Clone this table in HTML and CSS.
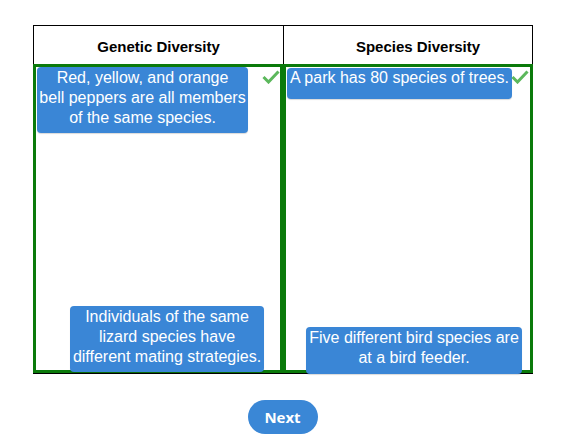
FILE: index.html
```html
<!DOCTYPE html>
<html>
<head>
<meta charset="utf-8">
<link rel="stylesheet" href="styles.css">
</head>
<body>
<div class="wrap">
  <div class="table">
    <div class="head head-left">Genetic Diversity</div>
    <div class="head head-right">Species Diversity</div>
    <div class="cell">
      <div class="card c1">Red, yellow, and orange<br>bell peppers are all members<br>of the same species.</div>
      <svg class="check k1" width="18" height="14" viewBox="0 0 18 14"><polyline points="1.5,7 6.5,12 16.5,1.5" fill="none" stroke="#5cb85c" stroke-width="3"/></svg>
      <div class="card c3">Individuals of the same<br>lizard species have<br>different mating strategies.</div>
    </div>
    <div class="cell">
      <div class="card c2">A park has 80 species of trees.</div>
      <svg class="check k2" width="18" height="14" viewBox="0 0 18 14"><polyline points="1.5,7 6.5,12 16.5,1.5" fill="none" stroke="#5cb85c" stroke-width="3"/></svg>
      <div class="card c4">Five different bird species are<br>at a bird feeder.</div>
    </div>
  </div>
  <div class="actions">
    <button class="next">Next</button>
  </div>
</div>
</body>
</html>
```
FILE: styles.css
```css
html, body {
  margin: 0;
  padding: 0;
  background: #fff;
}
.wrap {
  width: 500px;
  margin-left: 33px;
  padding-top: 25px;
}
.table {
  display: grid;
  grid-template-columns: 250px 250px;
  border-bottom: 1px solid #000;
}
.head {
  border-top: 1px solid #000;
  border-left: 1px solid #000;
  font-family: "Liberation Sans", Arial, sans-serif;
  font-weight: bold;
  font-size: 15px;
  color: #000;
  display: flex;
  align-items: center;
  justify-content: center;
  box-sizing: border-box;
  height: 39px;
  padding-top: 3px;
}
.head-right {
  border-right: 1px solid #000;
  padding-left: 20px;
}
.cell {
  position: relative;
  height: 309px;
  border: 3px solid #0b7a0b;
  box-sizing: border-box;
}
.card {
  position: absolute;
  box-sizing: border-box;
  background: #3a86d6;
  color: #fff;
  font-family: "Liberation Sans", Arial, sans-serif;
  font-size: 16px;
  line-height: 20px;
  text-align: center;
  border-radius: 4px;
  padding: 1px 1px;
  white-space: nowrap;
  box-shadow: 0 1px 1px rgba(0,0,0,0.15);
}
.c1 { left: 1px; top: 0; width: 211px; height: 66px; }
.c3 { left: 34px; top: 239px; width: 194px; height: 66px; padding-top: 1px; }
.c2 { left: 1px; top: 1px; width: 225px; height: 31px; padding-top: 0; }
.c4 { left: 20px; top: 260px; width: 216px; height: 47px; padding-top: 1px; }
.check {
  position: absolute;
  top: 3px;
}
.k1 { left: 226px; }
.k2 { left: 225px; }
.actions {
  display: flex;
  justify-content: center;
  padding-top: 26px;
}
.next {
  width: 70px;
  height: 34px;
  border: none;
  border-radius: 17px;
  background: #3a87d6;
  color: #fff;
  font-family: "Open Sans", sans-serif;
  font-weight: bold;
  font-size: 15px;
  padding: 0;
  margin-left: -1px;
}
```
